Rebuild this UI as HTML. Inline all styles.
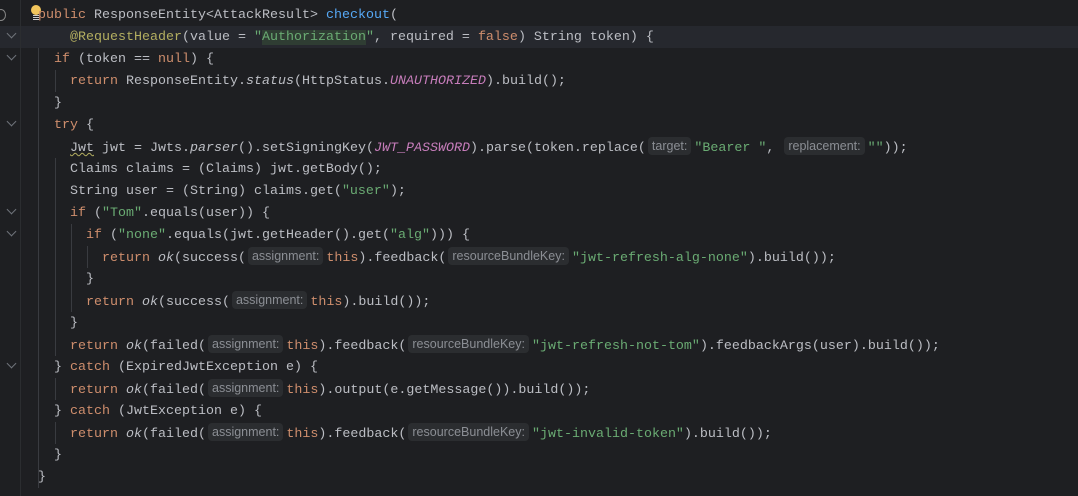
<!DOCTYPE html>
<html><head><meta charset="utf-8"><style>
html,body{margin:0;padding:0;background:#1e1f22;width:1078px;height:496px;overflow:hidden}
.g{position:absolute;left:20px;top:0;width:1px;height:496px;background:#2b2d30}
.hl{position:absolute;left:0;top:26px;width:1078px;height:22px;background:#26282e}
.code{position:absolute;left:38px;top:5px;font-family:"Liberation Mono",monospace;font-size:13.33px;line-height:22px;color:#bcbec4}
.l{height:22px;white-space:pre}
.k{color:#cf8e6d}.m{color:#56a8f5}.s{color:#6aab73}.a{color:#b3ae60}.i{font-style:italic}.c{color:#c77dbb;font-style:italic}
.oc{background:#2f3d33}
.h{display:inline-block;font-family:"Liberation Sans",sans-serif;font-size:12.5px;line-height:18px;height:18px;color:#8b8e94;background:#2b2d30;border-radius:4px;padding:0 4px;margin:0 3px 0 2px;vertical-align:1px;font-style:normal}
.ig{position:absolute;width:1px;background:#393b40}
.ch{position:absolute;left:8px;width:6px;height:6px;border-right:1px solid #6f737a;border-bottom:1px solid #6f737a;transform:rotate(45deg)}
.sq{text-decoration:underline wavy #b3ae60;text-decoration-thickness:1px}
</style></head><body>
<div class="hl"></div>
<div class="g"></div>
<div class="ig" style="left:38px;top:48px;height:440px"></div>
<div class="ig" style="left:55px;top:70px;height:22px"></div>
<div class="ig" style="left:55px;top:158px;height:198px"></div>
<div class="ig" style="left:71px;top:224px;height:88px"></div>
<div class="ig" style="left:87px;top:246px;height:22px"></div>
<div class="ig" style="left:55px;top:378px;height:22px"></div>
<div class="ig" style="left:55px;top:422px;height:22px"></div>
<div class="ch" style="top:30px"></div>
<div class="ch" style="top:52px"></div>
<div class="ch" style="top:118px"></div>
<div class="ch" style="top:206px"></div>
<div class="ch" style="top:228px"></div>
<div class="ch" style="top:360px"></div>
<div style="position:absolute;left:-4px;top:9px;width:8px;height:10px;border-radius:50%;border:1px solid #888"></div>
<div style="position:absolute;left:31px;top:5px;width:10px;height:10px;border-radius:50%;background:#f2c55c"></div>
<div style="position:absolute;left:33px;top:15px;width:6px;height:1px;background:#ccc;box-shadow:0 2px 0 #ccc,0 4px 0 #ccc"></div>
<div class="code"><div class="l"><span class="k">public</span> ResponseEntity&lt;AttackResult&gt; <span class="m">checkout</span>(</div><div class="l">    <span class="a">@RequestHeader</span>(value = <span class="s">"<span class="oc">Authorization</span>"</span>, required = <span class="k">false</span>) String token) {</div><div class="l">  <span class="k">if</span> (token == <span class="k">null</span>) {</div><div class="l">    <span class="k">return</span> ResponseEntity.<span class="i">status</span>(HttpStatus.<span class="c">UNAUTHORIZED</span>).build();</div><div class="l">  }</div><div class="l">  <span class="k">try</span> {</div><div class="l">    <span class="sq">Jwt</span> jwt = Jwts.<span class="i">parser</span>().setSigningKey(<span class="c">JWT_PASSWORD</span>).parse(token.replace(<span class="h">target:</span><span class="s">"Bearer "</span>, <span class="h">replacement:</span><span class="s">""</span>));</div><div class="l">    Claims claims = (Claims) jwt.getBody();</div><div class="l">    String user = (String) claims.get(<span class="s">"user"</span>);</div><div class="l">    <span class="k">if</span> (<span class="s">"Tom"</span>.equals(user)) {</div><div class="l">      <span class="k">if</span> (<span class="s">"none"</span>.equals(jwt.getHeader().get(<span class="s">"alg"</span>))) {</div><div class="l">        <span class="k">return</span> <span class="i">ok</span>(success(<span class="h">assignment:</span><span class="k">this</span>).feedback(<span class="h">resourceBundleKey:</span><span class="s">"jwt-refresh-alg-none"</span>).build());</div><div class="l">      }</div><div class="l">      <span class="k">return</span> <span class="i">ok</span>(success(<span class="h">assignment:</span><span class="k">this</span>).build());</div><div class="l">    }</div><div class="l">    <span class="k">return</span> <span class="i">ok</span>(failed(<span class="h">assignment:</span><span class="k">this</span>).feedback(<span class="h">resourceBundleKey:</span><span class="s">"jwt-refresh-not-tom"</span>).feedbackArgs(user).build());</div><div class="l">  } <span class="k">catch</span> (ExpiredJwtException e) {</div><div class="l">    <span class="k">return</span> <span class="i">ok</span>(failed(<span class="h">assignment:</span><span class="k">this</span>).output(e.getMessage()).build());</div><div class="l">  } <span class="k">catch</span> (JwtException e) {</div><div class="l">    <span class="k">return</span> <span class="i">ok</span>(failed(<span class="h">assignment:</span><span class="k">this</span>).feedback(<span class="h">resourceBundleKey:</span><span class="s">"jwt-invalid-token"</span>).build());</div><div class="l">  }</div><div class="l">}</div></div>
</body></html>
